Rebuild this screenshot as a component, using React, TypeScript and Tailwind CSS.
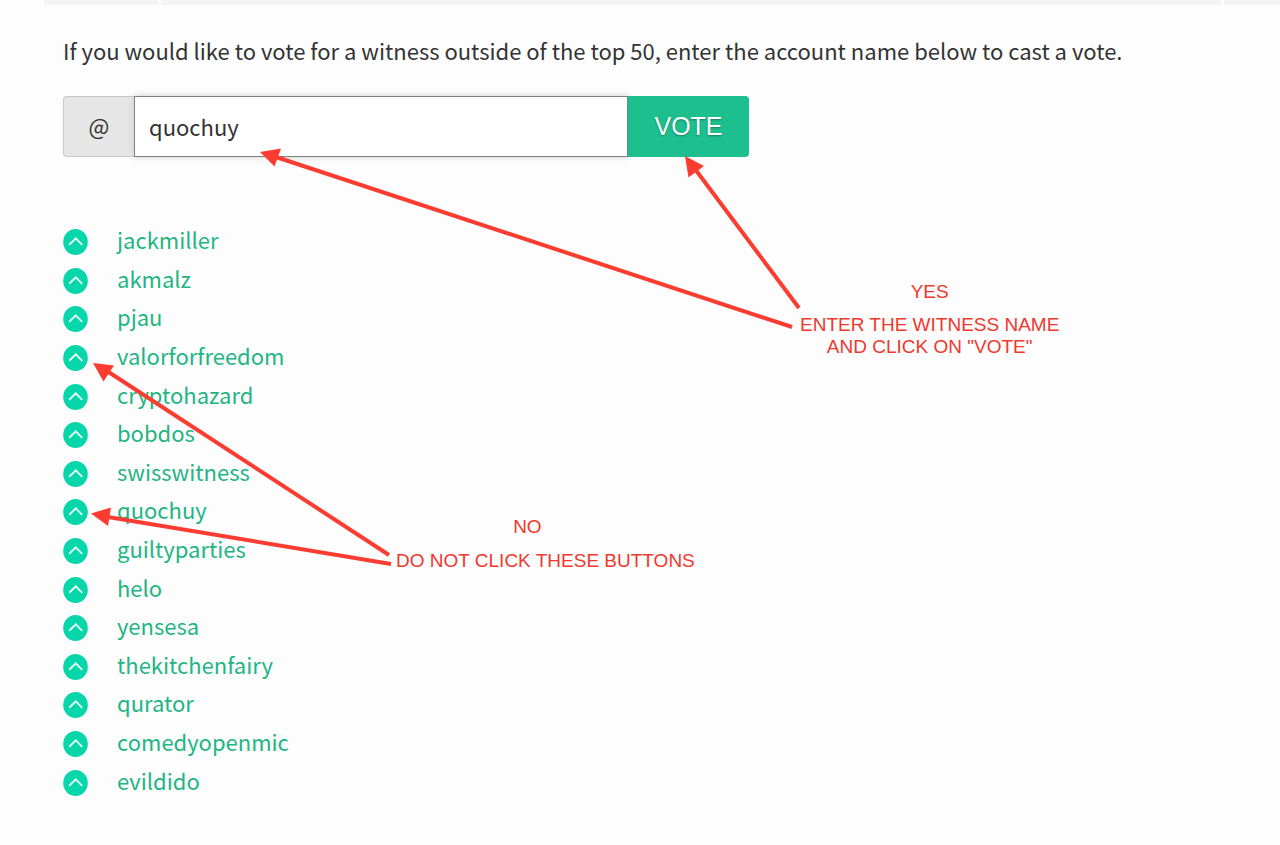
import { useState } from "react";

const WITNESSES = [
  "jackmiller",
  "akmalz",
  "pjau",
  "valorforfreedom",
  "cryptohazard",
  "bobdos",
  "swisswitness",
  "quochuy",
  "guiltyparties",
  "helo",
  "yensesa",
  "thekitchenfairy",
  "qurator",
  "comedyopenmic",
  "evildido",
];

function ChevronUpCircle() {
  return (
    <svg viewBox="0 0 25 26" className="h-[26px] w-[25px]" aria-hidden="true">
      <ellipse cx="12.5" cy="13" rx="12.3" ry="13" fill="#06d6a9" />
      <path
        d="M6.2 15.8 12.8 9.4l6.4 6.4"
        fill="none"
        stroke="#e4fff8"
        strokeWidth="1.9"
      />
    </svg>
  );
}

function WitnessRow({ name }: { name: string }) {
  return (
    <li className="flex items-center gap-[29px]">
      <button type="button" aria-label={`Vote for ${name}`}>
        <ChevronUpCircle />
      </button>
      <a href={`#@${name}`} className="pb-[6px] leading-8 text-[#22b583]">
        {name}
      </a>
    </li>
  );
}

function VoteForm() {
  const [account, setAccount] = useState("quochuy");

  return (
    <form
      className="mt-7 flex h-[61px] w-full max-w-[686px]"
      onSubmit={(e) => e.preventDefault()}
    >
      <label
        htmlFor="account"
        className="flex w-[71px] items-center justify-center rounded-l-[4px] border border-r-0 border-[#c8c8c8] bg-[#e6e6e6] pb-[2px]"
      >
        @
      </label>
      <input
        id="account"
        type="text"
        value={account}
        onChange={(e) => setAccount(e.target.value)}
        className="min-w-0 flex-1 border border-[#7f7f7f] bg-white px-[14px] shadow-[0_0_6px_#cacaca] outline-none"
      />
      <button
        type="submit"
        className="w-[121px] rounded-r-[4px] bg-[#1dbf8e] font-['Liberation_Sans',sans-serif] text-[25px] text-white [text-shadow:0_1px_2px_rgba(0,0,0,0.35)]"
      >
        VOTE
      </button>
    </form>
  );
}

function Arrows() {
  return (
    <svg
      width="1280"
      height="845"
      className="pointer-events-none absolute top-0 left-0"
      aria-hidden="true"
    >
      <g stroke="#fb3d31" strokeWidth="4">
        <path d="M276 157 792 327" />
        <path d="M695 169 799 308" />
        <path d="M107 371 389 555" />
        <path d="M108 517 391 564" />
      </g>
      <g fill="#fb3d31">
        <path d="M260 152 281 148.500 274.500 166.500z" />
        <path d="M685 156 704 166 688.500 177.500z" />
        <path d="M93 363 114 365.500 103.500 381.500z" />
        <path d="M91 513.500 111 507.500 108 526z" />
      </g>
    </svg>
  );
}

export default function App() {
  return (
    <div className="relative min-h-screen bg-[#fdfdfd] font-['Noto_Sans_CJK_SC',sans-serif] text-[22px] text-[#333]">
      <div className="flex h-[5px] gap-[3px] pl-11">
        <div className="w-[114px] bg-[#f4f4f4]" />
        <div className="flex-1 bg-[#f4f4f4]" />
        <div className="w-[56px] bg-[#f4f4f4]" />
      </div>

      <main className="px-[63px] pt-[27px]">
        <p className="leading-9">
          If you would like to vote for a witness outside of the top 50, enter
          the account name below to cast a vote.
        </p>
        <VoteForm />
        <ul className="mt-[66px] grid h-[579px] auto-rows-fr">
          {WITNESSES.map((name) => (
            <WitnessRow key={name} name={name} />
          ))}
        </ul>
      </main>

      <Arrows />
      <div className="absolute top-[281px] left-[800px] text-center font-['Liberation_Sans',sans-serif] text-[19px] leading-[22px] text-[#f0382d]">
        <p>YES</p>
        <p className="mt-[11px]">
          ENTER THE WITNESS NAME
          <br />
          AND CLICK ON "VOTE"
        </p>
      </div>
      <div className="absolute top-[516px] left-[396px] text-center font-['Liberation_Sans',sans-serif] text-[19px] leading-[22px] text-[#f0382d]">
        <p className="pr-9">NO</p>
        <p className="mt-3">DO NOT CLICK THESE BUTTONS</p>
      </div>
    </div>
  );
}
